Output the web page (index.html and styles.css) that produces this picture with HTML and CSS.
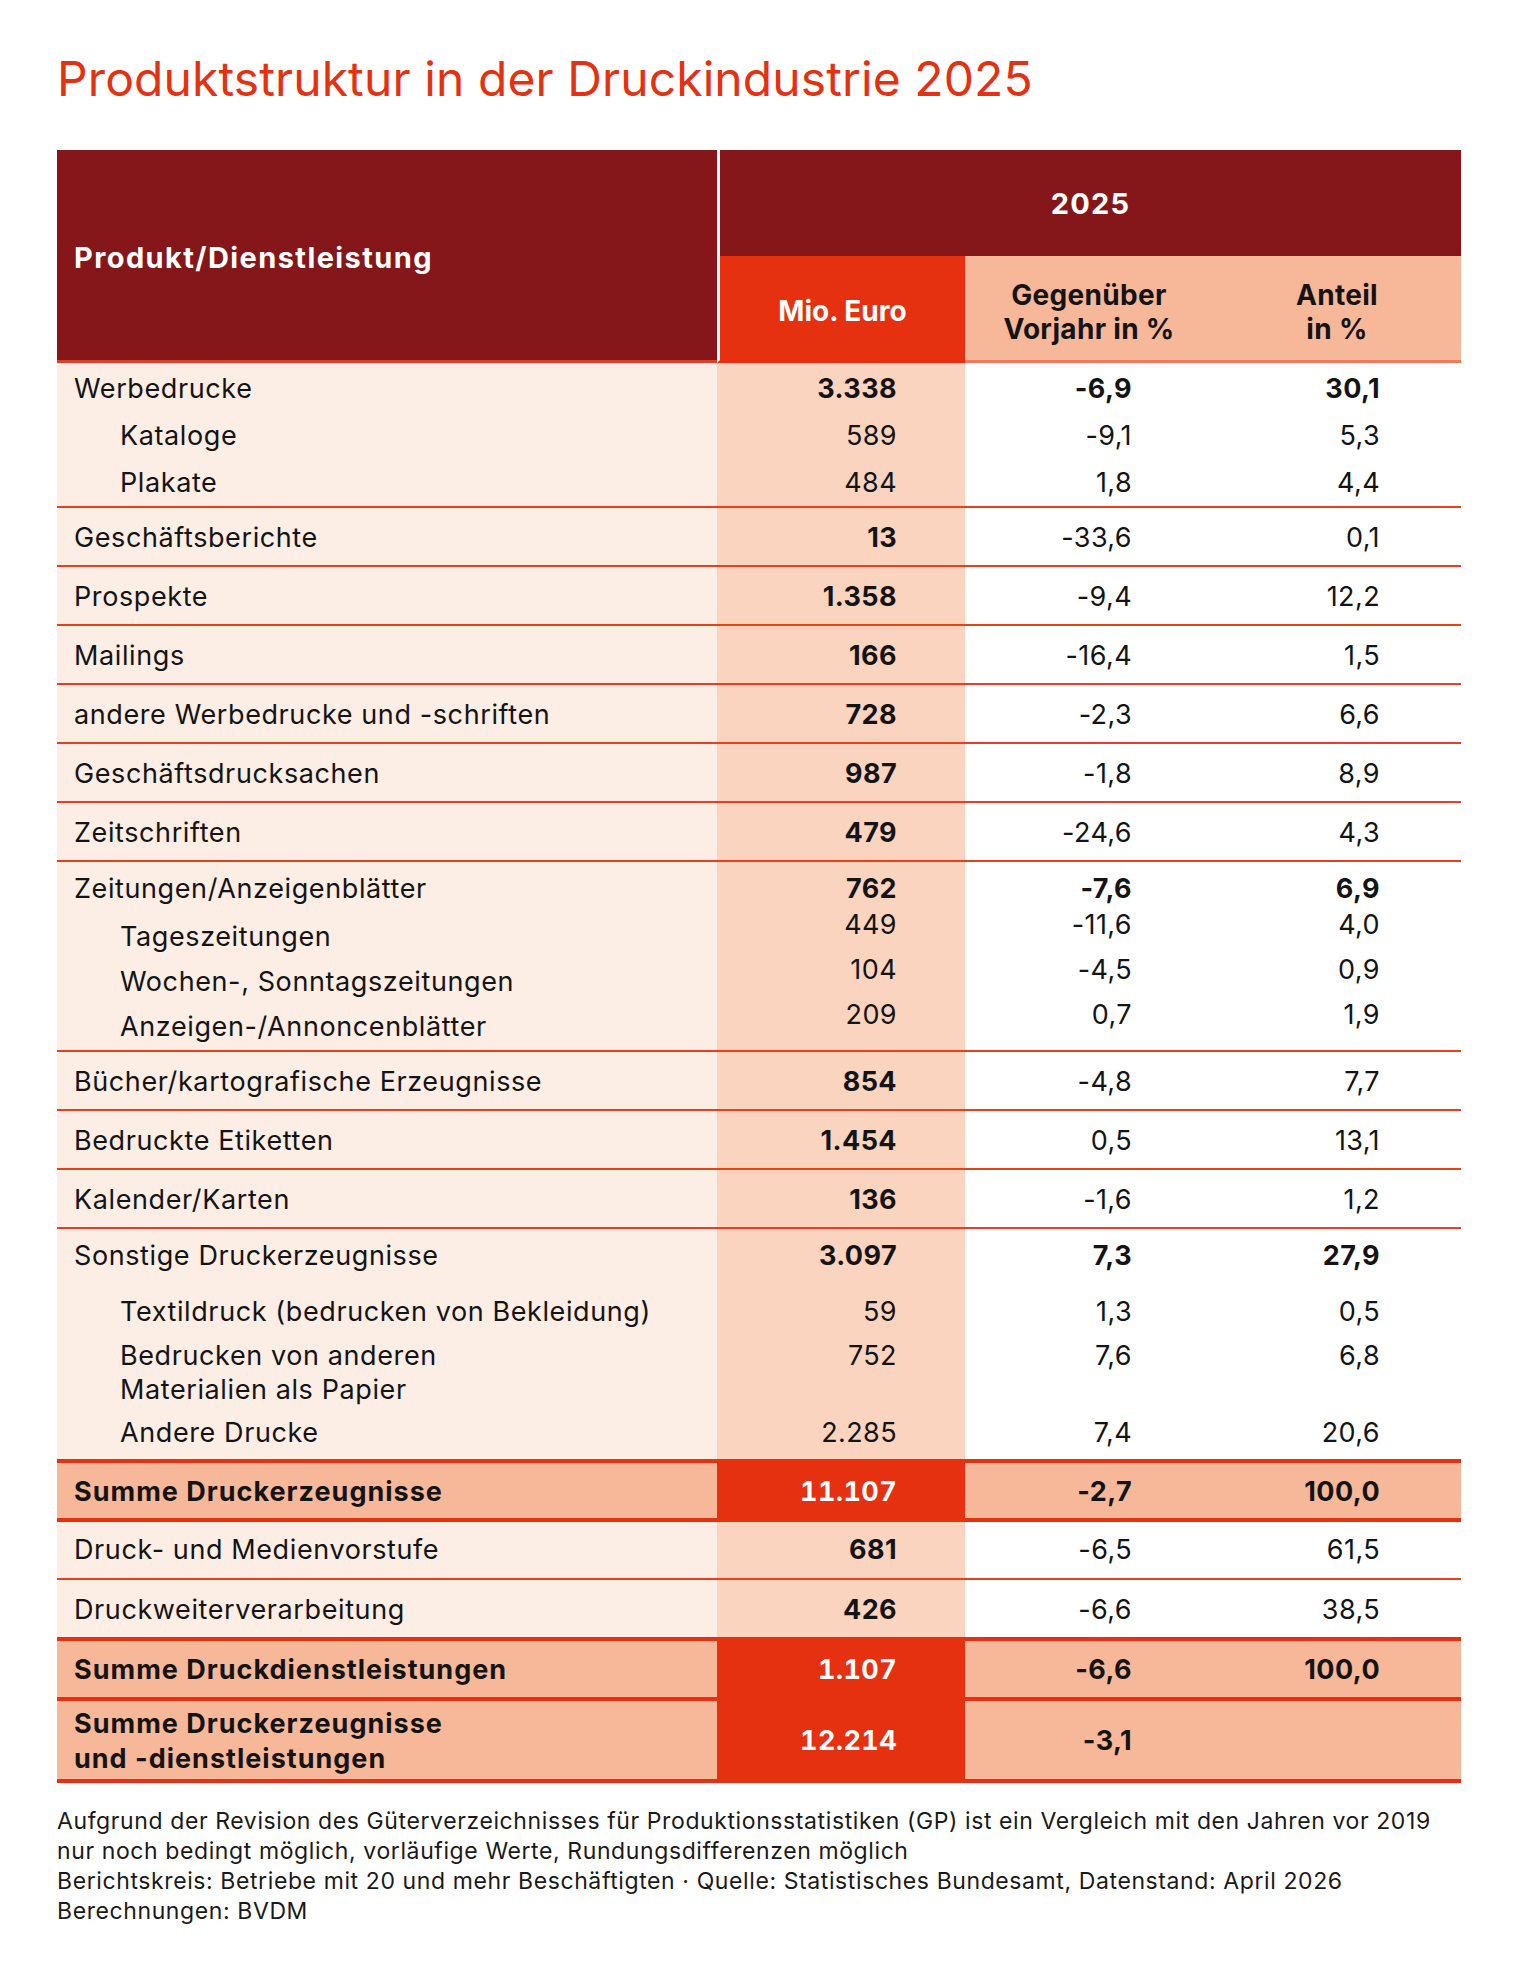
FILE: index.html
```html
<!DOCTYPE html>
<html lang="de">
<head>
    <meta charset="UTF-8">
    <meta name="viewport" content="width=device-width, initial-scale=1.0">
    <title>Produktstruktur in der Druckindustrie 2025</title>
    <link rel="stylesheet" href="styles.css">
</head>
<body>

<div class="page">
    <h1>Produktstruktur in der Druckindustrie 2025</h1>

    <div class="tbl">
        <div class="head">
            <div class="h-label">Produkt/Dienstleistung</div>
            <div class="h-year">2025</div>
            <div class="h-mio">Mio. Euro</div>
            <div class="h-sub">Gegenüber<br>Vorjahr in %</div>
            <div class="h-sub">Anteil<br>in %</div>
        </div>

        <!-- Werbedrucke -->
        <div class="row g1">
            <div class="lab"><div class="ln">Werbedrucke</div><div class="ln sub">Kataloge</div><div class="ln sub">Plakate</div></div>
            <div class="mio"><div class="ln b">3.338</div><div class="ln">589</div><div class="ln">484</div></div>
            <div class="num"><div class="ln b">-6,9</div><div class="ln">-9,1</div><div class="ln">1,8</div></div>
            <div class="num"><div class="ln b">30,1</div><div class="ln">5,3</div><div class="ln">4,4</div></div>
        </div>
        <div class="row"><div class="lab">Geschäftsberichte</div><div class="mio b">13</div><div class="num">-33,6</div><div class="num">0,1</div></div>
        <div class="row"><div class="lab">Prospekte</div><div class="mio b">1.358</div><div class="num">-9,4</div><div class="num">12,2</div></div>
        <div class="row"><div class="lab">Mailings</div><div class="mio b">166</div><div class="num">-16,4</div><div class="num">1,5</div></div>
        <div class="row"><div class="lab">andere Werbedrucke und -schriften</div><div class="mio b">728</div><div class="num">-2,3</div><div class="num">6,6</div></div>
        <div class="row"><div class="lab">Geschäftsdrucksachen</div><div class="mio b">987</div><div class="num">-1,8</div><div class="num">8,9</div></div>
        <div class="row"><div class="lab">Zeitschriften</div><div class="mio b">479</div><div class="num">-24,6</div><div class="num">4,3</div></div>

        <!-- Zeitungen -->
        <div class="row g2">
            <div class="lab"><div class="ln">Zeitungen/Anzeigenblätter</div><div class="ln sub">Tageszeitungen</div><div class="ln sub">Wochen-, Sonntagszeitungen</div><div class="ln sub">Anzeigen-/Annoncenblätter</div></div>
            <div class="mio"><div class="ln b">762</div><div class="ln">449</div><div class="ln">104</div><div class="ln">209</div></div>
            <div class="num"><div class="ln b">-7,6</div><div class="ln">-11,6</div><div class="ln">-4,5</div><div class="ln">0,7</div></div>
            <div class="num"><div class="ln b">6,9</div><div class="ln">4,0</div><div class="ln">0,9</div><div class="ln">1,9</div></div>
        </div>
        <div class="row"><div class="lab">Bücher/kartografische Erzeugnisse</div><div class="mio b">854</div><div class="num">-4,8</div><div class="num">7,7</div></div>
        <div class="row"><div class="lab">Bedruckte Etiketten</div><div class="mio b">1.454</div><div class="num">0,5</div><div class="num">13,1</div></div>
        <div class="row"><div class="lab">Kalender/Karten</div><div class="mio b">136</div><div class="num">-1,6</div><div class="num">1,2</div></div>

        <!-- Sonstige -->
        <div class="row g3 thick">
            <div class="lab"><div class="ln">Sonstige Druckerzeugnisse</div><div class="ln sub">Textildruck (bedrucken von Bekleidung)</div><div class="ln sub">Bedrucken von anderen<br>Materialien als Papier</div><div class="ln sub">Andere Drucke</div></div>
            <div class="mio"><div class="ln b">3.097</div><div class="ln">59</div><div class="ln">752</div><div class="ln">2.285</div></div>
            <div class="num"><div class="ln b">7,3</div><div class="ln">1,3</div><div class="ln">7,6</div><div class="ln">7,4</div></div>
            <div class="num"><div class="ln b">27,9</div><div class="ln">0,5</div><div class="ln">6,8</div><div class="ln">20,6</div></div>
        </div>

        <div class="row sum s1"><div class="lab">Summe Druckerzeugnisse</div><div class="mio">11.107</div><div class="num">-2,7</div><div class="num">100,0</div></div>
        <div class="row r-vor"><div class="lab">Druck- und Medienvorstufe</div><div class="mio b">681</div><div class="num">-6,5</div><div class="num">61,5</div></div>
        <div class="row thick"><div class="lab">Druckweiterverarbeitung</div><div class="mio b">426</div><div class="num">-6,6</div><div class="num">38,5</div></div>
        <div class="row sum"><div class="lab">Summe Druckdienstleistungen</div><div class="mio">1.107</div><div class="num">-6,6</div><div class="num">100,0</div></div>
        <div class="row sum s3"><div class="lab">Summe Druckerzeugnisse<br>und -dienstleistungen</div><div class="mio">12.214</div><div class="num">-3,1</div><div class="num"></div></div>
    </div>

    <div class="note">
        <div>Aufgrund der Revision des Güterverzeichnisses für Produktionsstatistiken (GP) ist ein Vergleich mit den Jahren vor 2019</div>
        <div>nur noch bedingt möglich, vorläufige Werte, Rundungsdifferenzen möglich</div>
        <div>Berichtskreis: Betriebe mit 20 und mehr Beschäftigten · Quelle: Statistisches Bundesamt, Datenstand: April 2026</div>
        <div>Berechnungen: BVDM</div>
    </div>
</div>

</body>
</html>
```

FILE: styles.css
```css
:root { --red: #e5310f; --dark: #85171a; --peach: #f7b899; --mio: #fbd4c0; --lab: #fcede5; --line: #e8401c; }
body { margin: 0; background: #fff; color: #141414; font-family: Inter, 'Liberation Sans', sans-serif; }

.page { width: 1404px; padding: 50px 0 40px 57px; }
h1 { margin: 0 0 42px; font-size: 48px; line-height: 58px; font-weight: 400; color: var(--red); letter-spacing: 0.1px; }

/* Header */
.head { display: grid; grid-template-columns: 660px 248px 248px 248px; grid-template-rows: 106px 107px; font-size: 28px; font-weight: 700; letter-spacing: 0.3px; }
.h-label { grid-row: 1 / 3; background: var(--dark); color: #fff; display: flex; align-items: center; padding: 4px 0 0 17px; border-bottom: 3px solid #d9412a; font-size: 29px; letter-spacing: 1.4px; }
.h-year { grid-column: 2 / 5; background: var(--dark); color: #fff; border-left: 3px solid #fff; display: flex; align-items: center; justify-content: center; font-size: 29px; letter-spacing: 1.2px; }
.h-mio { background: var(--red); color: #fff; border-left: 3px solid #fff; border-bottom: 3px solid var(--red); display: flex; align-items: center; justify-content: center; letter-spacing: 0; padding-top: 5px; }
.h-sub { background: var(--peach); border-bottom: 3px solid #ef7b5e; display: flex; align-items: center; justify-content: center; text-align: center; line-height: 34px; padding-top: 7px; }

/* Body rows */
.row { display: grid; grid-template-columns: 660px 248px 248px 248px; border-bottom: 2px solid var(--line); font-size: 27px; line-height: 46px; letter-spacing: 0.6px; }
.row > div { padding-top: 7px; padding-bottom: 4px; display: flex; flex-direction: column; white-space: nowrap; }
.row .lab { background: var(--lab); padding-left: 17px; }
.row .mio { background: var(--mio); text-align: right; padding-right: 68px; letter-spacing: 0.4px; }
.row .num { background: #fff; text-align: right; padding-right: 81px; letter-spacing: 0.4px; }
.b { font-weight: 700; }
.sub { padding-left: 46px; }

.thick { border-bottom: 4px solid var(--red); }

/* groups */
.g1 > div { padding-top: 3px; padding-bottom: 0; }
.g1 .ln + .ln { margin-top: 1px; }

.g2 > div { padding-top: 4px; padding-bottom: 1px; }
.g2 .ln + .ln { line-height: 45px; }
.g2 .lab .ln:nth-child(2) { margin-top: 2px; }
.g2 .mio .ln:nth-child(2), .g2 .num .ln:nth-child(2) { margin-top: -10px; }

.g3 > div { padding-top: 4px; padding-bottom: 3px; }
.g3 .ln:nth-child(2) { margin-top: 10px; }
.g3 .ln:nth-child(3) { margin-top: 4px; line-height: 34px; height: 68px; }
.g3 .ln:nth-child(4) { margin-top: 3px; }

/* sums */
.sum { border-bottom: 4px solid var(--red); font-weight: 700; }
.sum > div { padding-top: 6px; padding-bottom: 4px; }
.row.sum .lab { background: var(--peach); letter-spacing: 1px; }
.row.sum .num { background: var(--peach); }
.row.sum .mio { background: var(--red); color: #fff; font-variant-numeric: tabular-nums; }
.s1 > div { padding-bottom: 3px; }
.r-vor > div { padding-top: 5px; padding-bottom: 5px; }
.s3 > div { padding-top: 5px; padding-bottom: 3px; justify-content: center; }
.s3 .lab { line-height: 35px; }

/* footnote */
.note { margin-top: 23px; font-size: 23px; line-height: 30px; letter-spacing: 0.6px; color: #1a1a1a; white-space: nowrap; }
```
